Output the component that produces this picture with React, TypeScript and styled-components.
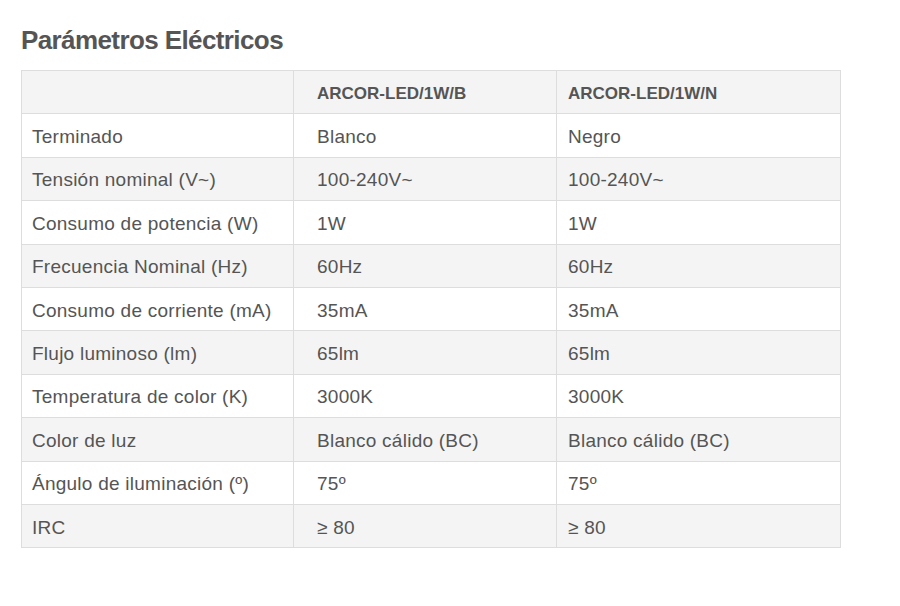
import React from "react";
import styled, { createGlobalStyle } from "styled-components";

const GlobalStyle = createGlobalStyle`
  body {
    margin: 0;
    background: #ffffff;
    font-family: "Liberation Sans", Arial, sans-serif;
  }
`;

const rows: [string, string, string][] = [
  ["Terminado", "Blanco", "Negro"],
  ["Tensión nominal (V~)", "100-240V~", "100-240V~"],
  ["Consumo de potencia (W)", "1W", "1W"],
  ["Frecuencia Nominal (Hz)", "60Hz", "60Hz"],
  ["Consumo de corriente (mA)", "35mA", "35mA"],
  ["Flujo luminoso (lm)", "65lm", "65lm"],
  ["Temperatura de color (K)", "3000K", "3000K"],
  ["Color de luz", "Blanco cálido (BC)", "Blanco cálido (BC)"],
  ["Ángulo de iluminación (º)", "75º", "75º"],
  ["IRC", "≥ 80", "≥ 80"],
];

function App() {
  return (
    <>
      <GlobalStyle />
      <Page>
        <Title>Parámetros Eléctricos</Title>
        <Table>
          <thead>
            <Row striped>
              <HeadCell col={0}></HeadCell>
              <HeadCell col={1}>ARCOR-LED/1W/B</HeadCell>
              <HeadCell col={2}>ARCOR-LED/1W/N</HeadCell>
            </Row>
          </thead>
          <tbody>
            {rows.map((r, i) => (
              <Row key={r[0]} striped={i % 2 === 1}>
                <Cell col={0}>{r[0]}</Cell>
                <Cell col={1}>{r[1]}</Cell>
                <Cell col={2}>{r[2]}</Cell>
              </Row>
            ))}
          </tbody>
        </Table>
      </Page>
    </>
  );
}

export default App;

const Page = styled.div`
  padding: 24px 0 0 21px;
`;

const Title = styled.h2`
  font-family: "Liberation Sans", sans-serif;
  font-weight: 700;
  font-size: 26px;
  line-height: 32px;
  letter-spacing: -0.6px;
  color: #555555;
  margin: 0 0 14px;
`;

const Table = styled.table`
  border-collapse: collapse;
  table-layout: fixed;
  width: 819px;
  border: 1px solid #dddddd;
`;

const Row = styled.tr<{ striped?: boolean }>`
  height: 43.4px;
  background: ${(p) => (p.striped ? "#f4f4f4" : "#ffffff")};
`;

const widths = [272, 263, 284];
const pads = [10, 23, 11];

const Cell = styled.td<{ col: number }>`
  width: ${(p) => widths[p.col]}px;
  padding: 3px 8px 0 ${(p) => pads[p.col]}px;
  border: 1px solid #dddddd;
  font-size: 19px;
  letter-spacing: 0.25px;
  color: #555555;
  text-align: left;
  vertical-align: middle;
  box-sizing: border-box;
`;

const HeadCell = styled(Cell).attrs({ as: "th" })`
  font-size: 17px;
  font-weight: 700;
  letter-spacing: 0;
`;
